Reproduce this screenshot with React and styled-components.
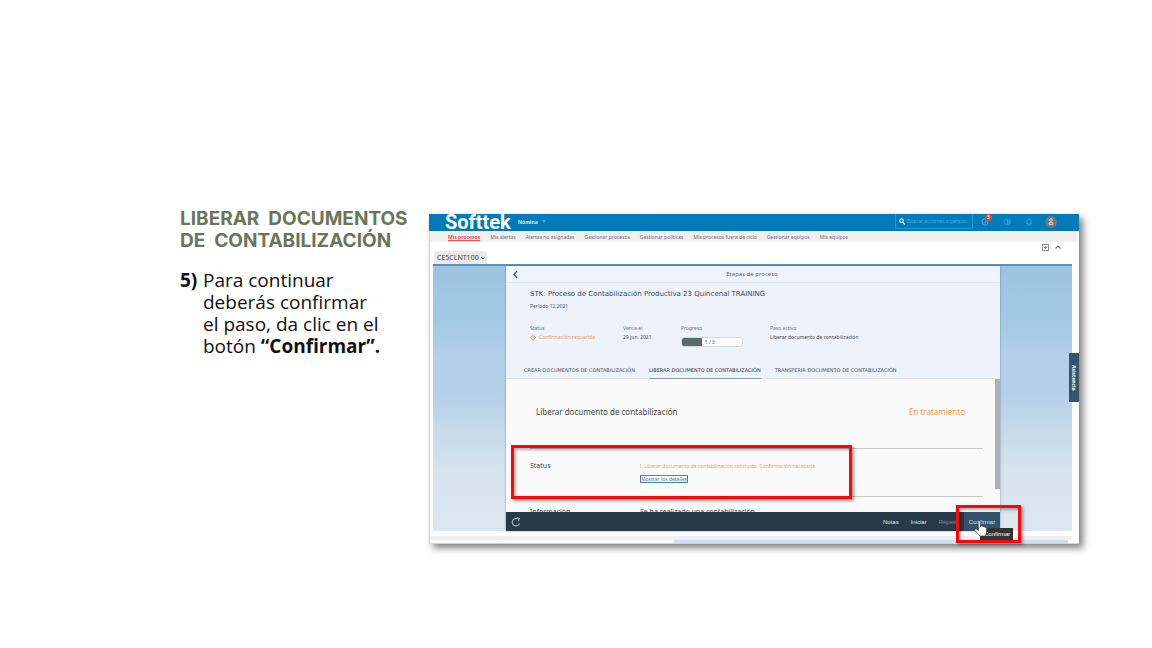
import React from "react";
import styled, { createGlobalStyle } from "styled-components";

const ui = `"Noto Sans", "Open Sans", sans-serif`;
const wide = `"DejaVu Sans", sans-serif`;
const compact = `"Liberation Sans", sans-serif`;

const Global = createGlobalStyle`
  *, *::before, *::after { box-sizing: border-box; }
  body { margin: 0; background: #fff; color: #111; font-family: "Open Sans", sans-serif; }
  h1, h2, h3, p, ol, ul, dl, dd, dt { margin: 0; padding: 0; }
  button { border: 0; padding: 0; background: none; font: inherit; color: inherit; cursor: pointer; }
  a { color: inherit; text-decoration: none; }
`;

const Slide = styled.main`
  display: grid;
  grid-template-columns: 249px minmax(0, 1fr);
  align-items: start;
  padding: 208px 73px 104px 180px;
`;

const Instructions = styled.section`
  font-size: 19px;
  line-height: 22px;
`;

const Heading = styled.h1`
  margin-bottom: 17px;
  font-family: Inter, sans-serif;
  font-size: 19px;
  font-weight: 700;
  color: #6a7559;
  white-space: pre;
`;

const Step = styled.div`
  display: flex;
  white-space: nowrap;
`;

const StepNumber = styled.strong`
  flex: 0 0 23px;
`;

const Shot = styled.section`
  position: relative;
  margin-top: 6px;
  background: #fff;
  border-left: 1px solid #d4d4d4;
  border-bottom: 1px solid #d4d4d4;
  box-shadow: 4px 4px 7px rgba(0, 0, 0, 0.5);
  font-family: ${ui};
  font-size: 5px;
  line-height: 8px;
  color: #4d5560;
`;

const ShellHeader = styled.header`
  display: flex;
  align-items: center;
  height: 17px;
  margin-left: -1px;
  padding: 0 22px 2px 16px;
  overflow: hidden;
  background: #007ab8;
  color: #fff;
`;

const Logo = styled.span`
  width: 73px;
  font-family: Roboto, sans-serif;
  font-size: 20px;
  line-height: 16px;
  font-weight: 700;
`;

const AreaButton = styled.button`
  display: flex;
  align-items: center;
  gap: 4px;
  font-weight: 700;
  color: #d9f1fc;
`;

const Search = styled.label`
  display: flex;
  align-items: center;
  gap: 2px;
  width: 78px;
  height: 15px;
  margin-left: auto;
  padding: 0 3px;
  border: 1px solid #1e9bd0;
  border-top: 0;
  color: #d9f1fc;
`;

const SearchInput = styled.input`
  flex: 1;
  min-width: 0;
  padding: 0;
  border: 0;
  outline: 0;
  background: none;
  font: 5px/8px ${ui};
  color: #fff;
  &::placeholder { color: #35b5e6; opacity: 1; }
`;

const HeaderIcons = styled.div`
  display: flex;
  align-items: center;
  gap: 14px;
  margin-left: 8px;
  color: #35b5e6;
`;

const IconButton = styled.button`
  position: relative;
  display: flex;
`;

const Badge = styled.span`
  position: absolute;
  top: -4px;
  right: -3px;
  width: 7px;
  height: 7px;
  border-radius: 50%;
  background: #e0493f;
  color: #fff;
  font-size: 5px;
  line-height: 7px;
  text-align: center;
`;

const Avatar = styled(IconButton)`
  align-items: center;
  justify-content: center;
  width: 12px;
  height: 12px;
  margin-left: -2px;
  border-radius: 50%;
  background: #75767a;
  color: #d8d8d8;
`;

const ShellNav = styled.nav`
  display: flex;
  gap: 10px;
  height: 11px;
  margin-right: 2px;
  padding: 2px 18px 0;
  background: #efefef;
`;

const NavLink = styled.a`
  color: ${(p) => (p.$active ? "#f04a4f" : "#76688a")};
  font-weight: ${(p) => (p.$active ? 700 : 400)};
  text-decoration: ${(p) => (p.$active ? "underline" : "none")};
  white-space: nowrap;
`;

const TenantBar = styled.div`
  display: flex;
  justify-content: space-between;
  height: 22px;
  padding: 0 18px 0 4px;
`;

const TenantButton = styled.button`
  display: flex;
  align-items: center;
  gap: 2px;
  align-self: flex-end;
  height: 13px;
  padding: 0 2px 0 3px;
  border-radius: 2px 2px 0 0;
  background: #ebebe9;
  font-size: 7px;
  color: #444;
`;

const WindowTools = styled.div`
  display: flex;
  gap: 6px;
  align-self: flex-start;
  padding-top: 2px;
  color: #777;
`;

const Stage = styled.div`
  margin: 0 7px 0 3px;
  padding: 0 72px 0 73px;
  border-top: 2px solid #5a93bb;
  background: linear-gradient(#9cc4e2 0%, #a3cae5 22%, #b4cfeb 35%, #b4cfe9 48%, #c4d9ea 60%, #d6e4ee 78%, #dce6f0 100%);
`;

const Dialog = styled.section`
  background: #eef2fb;
  box-shadow: 0 0 2px rgba(60, 90, 120, 0.6);
`;

const DialogHeader = styled.div`
  display: grid;
  grid-template-columns: 20px 1fr 28px;
  align-items: center;
  height: 17px;
  padding-left: 6px;
  border-bottom: 1px solid #e2e8f2;
  background: #f0f5fd;
  font-size: 6px;
  text-align: center;
  color: #5f6670;
`;

const BackButton = styled(IconButton)`
  color: #35607c;
`;

const Summary = styled.div`
  display: flex;
  flex-direction: column;
  min-height: 96px;
  padding: 6px 0 0 24px;
  border-bottom: 1px solid #e0e6ee;
`;

const ProcessTitle = styled.h2`
  font-family: ${wide};
  font-size: 7px;
  line-height: 10px;
  font-weight: 400;
  color: #3f4752;
`;

const Period = styled.p`
  margin-top: 3px;
`;

const Facts = styled.dl`
  display: grid;
  grid-template-columns: 93px 58px 89px 1fr;
  margin-top: 14px;
`;

const FactLabel = styled.dt`
  color: #6c7480;
`;

const FactValue = styled.dd`
  display: flex;
  align-items: center;
  gap: 3px;
  margin-top: 1px;
  color: ${(p) => (p.$warn ? "#f09a4a" : "#3f4752")};
`;

const Progress = styled.div`
  display: flex;
  align-items: center;
  width: 62px;
  height: 10px;
  margin-top: 5px;
  overflow: hidden;
  border: 1px solid #d5d9de;
  border-radius: 3px;
  background: #fff;
`;

const ProgressBar = styled.span`
  width: 33%;
  height: 10px;
  margin-right: 3px;
  background: #5a696e;
`;

const Tabs = styled.nav`
  display: flex;
  gap: 14px;
  margin: auto 0 -1px -6px;
`;

const Tab = styled.button`
  padding-bottom: 4px;
  border-bottom: 1px solid ${(p) => (p.$active ? "#7f9cab" : "transparent")};
  font-family: ${wide};
  line-height: 8px;
  color: ${(p) => (p.$active ? "#2e3742" : "#4d5560")};
  white-space: nowrap;
`;

const Content = styled.div`
  display: grid;
  grid-template-columns: minmax(0, 1fr) 5px;
  height: 133px;
  background: #fafafa;
`;

const ContentBody = styled.div`
  height: 133px;
  padding: 0 12px 0 24px;
  overflow: hidden;
`;

const ScrollThumb = styled.div`
  height: 110px;
  background: #b0b0b5;
`;

const SectionHead = styled.div`
  display: flex;
  justify-content: space-between;
  padding: 27px 18px 30px 6px;
  border-bottom: 1px solid #c6c6c6;
  font-size: 8px;
  line-height: 12px;
`;

const SectionTitle = styled.h3`
  font-size: 8px;
  font-weight: 400;
  color: #444;
`;

const SectionState = styled.span`
  color: #f3963a;
`;

const StatusRow = styled.div`
  position: relative;
  display: grid;
  grid-template-columns: 110px 1fr;
  min-height: ${(p) => (p.$marked ? "48px" : "16px")};
  padding-top: 13px;
  border-bottom: 1px solid #c6c6c6;
`;

const NextRow = styled(StatusRow)`
  padding-top: 11px;
`;

const RowLabel = styled.span`
  font-size: 7px;
  color: #444;
`;

const Message = styled.p`
  display: flex;
  gap: 3px;
  color: #f09c58;
  white-space: nowrap;
`;

const DetailsLink = styled.a`
  display: inline-block;
  margin-top: 5px;
  border: 1px solid #5f7f95;
  line-height: 6px;
  color: #4285a8;
  text-decoration: underline;
`;

const Mark = styled.span`
  position: absolute;
  inset: ${(p) => p.$inset};
  border: 3px solid #f80808;
  box-shadow: 2px 2px 3px rgba(0, 0, 0, 0.4), inset 2px 2px 3px rgba(0, 0, 0, 0.3);
  pointer-events: none;
`;

const Footer = styled.footer`
  display: flex;
  align-items: center;
  height: 19px;
  padding-left: 5px;
  background: #283947;
  font-family: ${compact};
  font-size: 6px;
  color: #dfe6ec;
`;

const RefreshButton = styled(IconButton)`
  color: #a9b6c0;
`;

const Actions = styled.div`
  display: flex;
  align-items: center;
  gap: 12px;
  margin-left: auto;
`;

const Action = styled.button`
  opacity: ${(p) => (p.disabled ? 0.45 : 1)};
`;

const ConfirmSlot = styled.div`
  position: relative;
  margin-left: -6px;
`;

const ConfirmButton = styled.button`
  width: 36px;
  height: 19px;
  background: #33536b;
  color: #d4e2ee;
`;

const Tooltip = styled.span`
  position: absolute;
  top: 16px;
  left: 16px;
  padding: 2px 3px 2px 4px;
  background: #333;
  color: #fff;
`;

const Pointer = styled.svg`
  position: absolute;
  top: 8px;
  left: 10px;
`;

const BottomBars = styled.div`
  margin-right: 7px;
  padding-top: 5px;
`;

const GreyBar = styled.div`
  height: 4px;
  background: #efefef;
`;

const BlueBar = styled.div`
  height: 3px;
  margin: 0 4px 0 38%;
  background: #cfdef4;
`;

const Assistance = styled.button`
  position: absolute;
  top: 139px;
  right: 0;
  width: 10px;
  height: 49px;
  background: #34556b;
  color: #fff;
  font-weight: 700;
  line-height: 10px;
  writing-mode: vertical-rl;
`;

const line = { fill: "none", stroke: "currentColor" };

const navItems = [
  "Mis procesos",
  "Mis alertas",
  "Alertas no asignadas",
  "Gestionar procesos",
  "Gestionar políticas",
  "Mis procesos fuera de ciclo",
  "Gestionar equipos",
  "Mis equipos",
];

const tabs = [
  "CREAR DOCUMENTOS DE CONTABILIZACIÓN",
  "LIBERAR DOCUMENTO DE CONTABILIZACIÓN",
  "TRANSFERIR DOCUMENTO DE CONTABILIZACIÓN",
];

function Chevron({ size = 4, up = false }) {
  return (
    <svg width={size} height={size} viewBox="0 0 6 6" {...line} strokeWidth="1.2" aria-hidden="true">
      <path d={up ? "M.5 4.5 3 2l2.5 2.5" : "M.5 2 3 4.5 5.5 2"} />
    </svg>
  );
}

function Shell() {
  return (
    <>
      <ShellHeader>
        <Logo>Softtek</Logo>
        <AreaButton>
          Nómina
          <svg width="4" height="3" viewBox="0 0 4 3" fill="#35b5e6" aria-hidden="true"><path d="M0 0h4L2 3z" /></svg>
        </AreaButton>
        <Search>
          <svg width="6" height="7" viewBox="0 0 6 7" {...line} strokeWidth="1.2" aria-hidden="true">
            <circle cx="2.5" cy="2.7" r="1.8" /><path d="M3.8 4.2 5.7 6.5" />
          </svg>
          <SearchInput aria-label="Buscar" placeholder="Buscar acciones o person..." />
        </Search>
        <HeaderIcons>
          <IconButton aria-label="Tareas">
            <svg width="8" height="8" viewBox="0 0 8 8" {...line} aria-hidden="true">
              <circle cx="4" cy="4" r="3" /><path d="m2.5 4 1 1.2L5.5 3" />
            </svg>
            <Badge>3</Badge>
          </IconButton>
          <IconButton aria-label="Tarjetas">
            <svg width="8" height="6" viewBox="0 0 8 6" {...line} strokeWidth=".8" aria-hidden="true">
              <rect x="1" y=".8" width="6" height="4.4" rx="1" /><path d="M4.5 1v4M5 3h2" />
            </svg>
          </IconButton>
          <IconButton aria-label="Notificaciones">
            <svg width="8" height="8" viewBox="0 0 8 8" {...line} strokeWidth=".9" aria-hidden="true">
              <path d="M1.5 6h5L6 5V3.300C6 .4 2 .4 2 3.300V5zM3.300 7.200h1.400" />
            </svg>
          </IconButton>
          <Avatar aria-label="Perfil">
            <svg width="6" height="7" viewBox="0 0 6 7" {...line} aria-hidden="true">
              <circle cx="3" cy="2" r="1.3" /><path d="M1 6.300V5.200Q3 3 5 5.200v1.100z" />
            </svg>
          </Avatar>
        </HeaderIcons>
      </ShellHeader>
      <ShellNav>
        {navItems.map((t, i) => (
          <NavLink key={t} href="#" $active={i === 0}>{t}</NavLink>
        ))}
      </ShellNav>
      <TenantBar>
        <TenantButton>CE5CLNT100 <Chevron /></TenantButton>
        <WindowTools>
          <IconButton aria-label="Ampliar">
            <svg width="7" height="7" viewBox="0 0 7 7" {...line} strokeWidth=".8" aria-hidden="true">
              <rect x=".5" y=".5" width="6" height="6" /><path d="M2 3.500h3M3.500 2v3" />
            </svg>
          </IconButton>
          <IconButton aria-label="Contraer"><Chevron size={6} up /></IconButton>
        </WindowTools>
      </TenantBar>
    </>
  );
}

function ProcessDialog() {
  return (
    <Dialog>
      <DialogHeader>
        <BackButton aria-label="Atrás">
          <svg width="7" height="9" viewBox="0 0 7 9" {...line} strokeWidth="1.3" aria-hidden="true">
            <path d="M5 1 2 4.500 5 8" />
          </svg>
        </BackButton>
        <span>Etapas de proceso</span>
      </DialogHeader>
      <Summary>
        <ProcessTitle>STK: Proceso de Contabilización Productiva 23 Quincenal TRAINING</ProcessTitle>
        <Period>Período 12.2021</Period>
        <Facts>
          <div>
            <FactLabel>Status</FactLabel>
            <FactValue $warn>
              <svg width="6" height="7" viewBox="0 0 6 7" {...line} strokeWidth=".8" aria-hidden="true">
                <path d="M3 .6 5.500 3.500 3 6.400.5 3.500zM3 2v2M3 4.600v.6" />
              </svg>
              Confirmación requerida
            </FactValue>
          </div>
          <div>
            <FactLabel>Vence el</FactLabel>
            <FactValue>29 jun. 2021</FactValue>
          </div>
          <div>
            <FactLabel>Progreso</FactLabel>
            <dd>
              <Progress><ProgressBar />1 / 3</Progress>
            </dd>
          </div>
          <div>
            <FactLabel>Paso activo</FactLabel>
            <FactValue>Liberar documento de contabilización</FactValue>
          </div>
        </Facts>
        <Tabs>
          {tabs.map((t, i) => (
            <Tab key={t} $active={i === 1}>{t}</Tab>
          ))}
        </Tabs>
      </Summary>
      <Content>
        <ContentBody>
          <SectionHead>
            <SectionTitle>Liberar documento de contabilización</SectionTitle>
            <SectionState>En tratamiento</SectionState>
          </SectionHead>
          <StatusRow $marked>
            <RowLabel>Status</RowLabel>
            <div>
              <Message>
                <b>!</b>Liberar documento de contabilización concluido. Confirmación necesaria
              </Message>
              <DetailsLink href="#">Mostrar los detalles</DetailsLink>
            </div>
            <Mark $inset="-4px 131px -3px -19px" />
          </StatusRow>
          <NextRow>
            <RowLabel>Información</RowLabel>
            <RowLabel>Se ha realizado una contabilización</RowLabel>
          </NextRow>
        </ContentBody>
        <ScrollThumb />
      </Content>
      <Footer>
        <RefreshButton aria-label="Actualizar">
          <svg width="10" height="10" viewBox="0 0 10 10" {...line} strokeWidth="1.1" aria-hidden="true">
            <path d="M6.500 1.800A3.700 3.700 0 1 0 8.500 6.300M5.800.5 8.300 1.500 7.500 4" />
          </svg>
        </RefreshButton>
        <Actions>
          <Action>Notas</Action>
          <Action>Iniciar</Action>
          <Action disabled>Repetir</Action>
          <ConfirmSlot>
            <ConfirmButton>Confirmar</ConfirmButton>
            <Tooltip role="tooltip">Confirmar</Tooltip>
            <Pointer width="14" height="17" viewBox="0 0 14 17" fill="#fff" stroke="#333" strokeWidth=".7" aria-hidden="true">
              <path d="M4 1.500c0-1.300 1.900-1.300 2 0l.5 5 .7-.6c.8-.4 1.500 0 1.700.8.8-.6 1.600-.2 1.900.6.900-.4 1.700.1 1.800 1l.1 3.200-1.200 4.500H6L1 10.500C.3 9.500 1.500 8.400 2.500 9.200L4.500 10.500z" />
            </Pointer>
            <Mark $inset="-7px -21px -12px -8px" />
          </ConfirmSlot>
        </Actions>
      </Footer>
    </Dialog>
  );
}

export default function App() {
  return (
    <>
      <Global />
      <Slide>
        <Instructions>
          <Heading>{"LIBERAR  DOCUMENTOS\nDE  CONTABILIZACIÓN"}</Heading>
          <Step>
            <StepNumber>5)</StepNumber>
            <p>
              Para continuar<br />
              deberás confirmar<br />
              el paso, da clic en el<br />
              botón <strong>“Confirmar”.</strong>
            </p>
          </Step>
        </Instructions>
        <Shot>
          <Shell />
          <Stage>
            <ProcessDialog />
          </Stage>
          <BottomBars>
            <GreyBar />
            <BlueBar />
          </BottomBars>
          <Assistance>Asistencia</Assistance>
        </Shot>
      </Slide>
    </>
  );
}
